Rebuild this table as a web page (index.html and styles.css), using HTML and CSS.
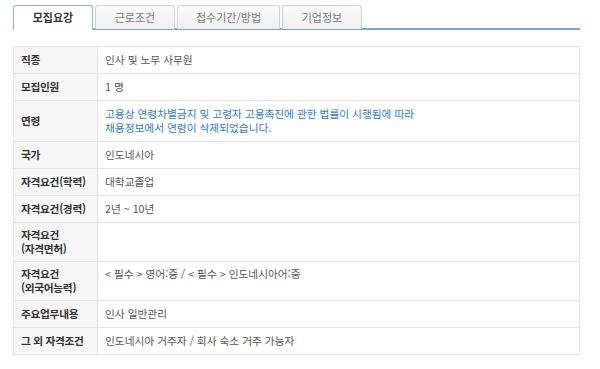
FILE: index.html
```html
<!DOCTYPE html>
<html lang="ko">
<head>
<meta charset="utf-8">
<title>모집요강</title>
<link rel="stylesheet" href="styles.css">
</head>
<body>
<div class="wrap">
  <ul class="tabs">
    <li class="tab active">모집요강</li>
    <li class="tab">근로조건</li>
    <li class="tab wide">접수기간/방법</li>
    <li class="tab">기업정보</li>
  </ul>
  <table class="info">
    <colgroup><col class="c-label"><col></colgroup>
    <tr><th>직종</th><td>인사 및 노무 사무원</td></tr>
    <tr><th>모집인원</th><td>1 명</td></tr>
    <tr><th>연령</th><td class="blue">고용상 연령차별금지 및 고령자 고용촉진에 관한 법률이 시행됨에 따라<br>채용정보에서 연령이 삭제되었습니다.</td></tr>
    <tr><th>국가</th><td>인도네시아</td></tr>
    <tr><th>자격요건(학력)</th><td>대학교졸업</td></tr>
    <tr><th>자격요건(경력)</th><td>2년 ~ 10년</td></tr>
    <tr class="two"><th>자격요건<br>(자격면허)</th><td></td></tr>
    <tr class="two"><th>자격요건<br>(외국어능력)</th><td class="top">&lt; 필수 &gt; 영어:중 / &lt; 필수 &gt; 인도네시아어:중</td></tr>
    <tr><th>주요업무내용</th><td>인사 일반관리</td></tr>
    <tr><th>그 외 자격조건</th><td>인도네시아 거주자 / 회사 숙소 거주 가능자</td></tr>
  </table>
</div>
</body>
</html>
```
FILE: styles.css
```css
* { box-sizing: border-box; }
body {
  margin: 0;
  background: #fff;
  font-family: "Noto Sans CJK KR", "Noto Sans", sans-serif;
  font-size: 10.7px;
  color: #555;
}
.wrap {
  padding: 5px 20px 0 13px;
}
.tabs {
  list-style: none;
  margin: 0;
  padding: 0;
  display: flex;
  gap: 2px;
  border-bottom: 2px solid #7aa3e6;
  height: 25px;
}
.tab {
  width: 80px;
  height: 24px;
  border: 1px solid #d2d2d2;
  border-bottom: none;
  border-radius: 3px 3px 0 0;
  background: linear-gradient(#fafafa, #efefef);
  color: #777;
  text-align: center;
  line-height: 22px;
  font-size: 11px;
}
.tab.wide { width: 103px; }
.tab.active {
  background: #fff;
  border: 1px solid #8fb2e8;
  border-bottom: none;
  height: 25px;
  color: #333;
  font-weight: bold;
  margin-bottom: -1px;
}
.info {
  margin-top: 16px;
  width: 567px;
  table-layout: fixed;
  border-collapse: collapse;
  border: 1px solid #e4e4e4;
}
.c-label { width: 84px; }
.info th, .info td {
  border-top: 1px solid #e4e4e4;
  padding: 6px 7px;
  line-height: 14px;
  vertical-align: middle;
}
.info .two th, .info .two td {
  padding-top: 5px;
  padding-bottom: 5px;
}
.info th {
  background: #f6f6f6;
  text-align: left;
  font-weight: bold;
  color: #333;
  border-right: 1px solid #e4e4e4;
  white-space: nowrap;
  letter-spacing: -0.3px;
}
.info td.blue { color: #2e7bd6; }
.info td.top { vertical-align: top; }
```
